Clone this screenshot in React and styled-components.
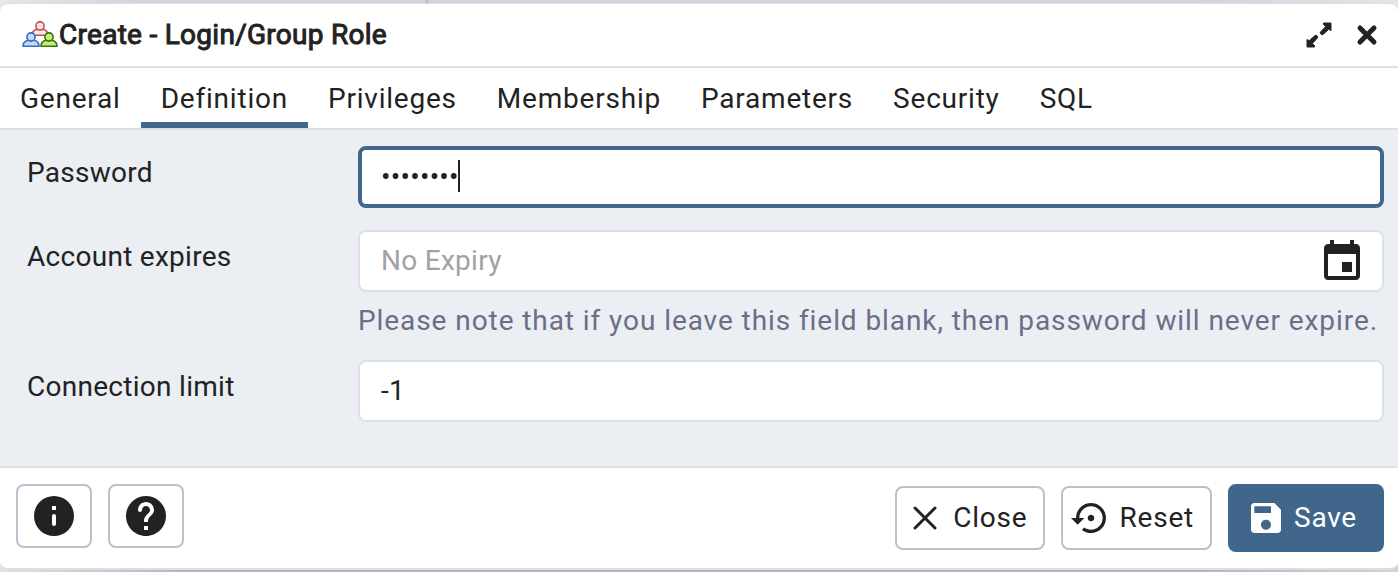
import React from "react";
import styled, { createGlobalStyle, css } from "styled-components";

const ink = "#222222";
const primary = "#41668c";
const line = "#dde0e6";
const outline = "#bac1cd";

const GlobalStyle = createGlobalStyle`
  *, *::before, *::after { box-sizing: border-box; }
  body {
    margin: 0;
    background: #b4bac6;
    color: ${ink};
    font-family: Roboto, "Liberation Sans", sans-serif;
    font-size: 28px;
    line-height: 36px;
    letter-spacing: 0.01em;
  }
  button, input { font: inherit; letter-spacing: inherit; color: inherit; }
`;

const Backdrop = styled.div`
  min-height: 100vh;
  padding: 3px 0 2px;
  background: linear-gradient(90deg, transparent 426px, #b4b9c3 426px, #b4b9c3 428px, transparent 428px) top / 100% 3px no-repeat,
    linear-gradient(90deg, #e6e6ec 0, #d0d4db 140px, #d0d4db 1200px, #e4e4ea 100%) top / 100% 12px no-repeat,
    linear-gradient(90deg, #e0e0e6 0, #b0b7c3 180px, #b0b7c3 1200px, #d0d3da 100%);
`;

const Dialog = styled.section`
  background: #fff;
  border-top: 1px solid #dcdee6;
  border-bottom: 2px solid #dadee5;
  border-radius: 8px;
  overflow: hidden;
`;

const TitleBar = styled.header`
  display: flex;
  align-items: center;
  height: 64px;
  padding: 0 18px 0 22px;
  border-bottom: 2px solid ${line};
`;

const Title = styled.h1`
  flex: 1;
  margin: 0;
  font-size: 28px;
  font-weight: 400;
  -webkit-text-stroke: 1px currentColor;
`;

const TitleButton = styled.button`
  display: flex;
  margin-left: 22px;
  padding: 0;
  border: 0;
  background: none;
`;

const Tabs = styled.nav`
  display: flex;
  height: 62px;
  border-bottom: 2px solid ${line};
`;

const Tab = styled.button`
  padding: 8px 20px 0;
  border: 0;
  border-bottom: 6px solid ${(p) => (p.$active ? primary : "transparent")};
  background: none;
  letter-spacing: 0.028em;
`;

const Form = styled.form`
  display: grid;
  grid-template-columns: 1fr 3fr;
  row-gap: 22px;
  padding: 16px 14px 44px 16px;
  background: #ebeef3;
`;

const Label = styled.label`
  padding: 9px 0 0 11px;
`;

const Field = styled.div`
  position: relative;
`;

const Input = styled.input`
  display: block;
  width: 100%;
  height: 62px;
  padding: 0 21px 2px;
  border: 2px solid ${line};
  border-radius: 8px;
  outline: 0;
  background: #fff;
  &::placeholder { color: #a2a2a2; opacity: 1; }
  ${(p) =>
    p.$focused &&
    css`
      padding: 0 19px 2px;
      border: 4px solid ${primary};
      caret-color: transparent;
    `}
`;

const Caret = styled.span`
  position: absolute;
  top: 14px;
  left: 100px;
  width: 2px;
  height: 32px;
  background: ${ink};
`;

const CalendarButton = styled.button`
  position: absolute;
  top: 6px;
  right: 18px;
  display: flex;
  padding: 0;
  border: 0;
  background: none;
`;

const Hint = styled.p`
  margin: 11px 0 -1px;
  color: #6b6e87;
  letter-spacing: 0.033em;
  white-space: nowrap;
`;

const Footer = styled.footer`
  display: flex;
  align-items: center;
  gap: 16px;
  height: 102px;
  padding: 0 14px 0 16px;
  border-top: 2px solid ${line};
`;

const Button = styled.button`
  display: flex;
  align-items: center;
  justify-content: center;
  gap: 8px;
  height: 64px;
  padding: 0 16px 0 8px;
  border: 2px solid ${outline};
  border-radius: 8px;
  background: #fff;
  letter-spacing: 0.028em;
  ${(p) =>
    p.$primary &&
    css`
      height: 68px;
      padding: 0 25px 0 16px;
      border-color: ${primary};
      background: ${primary};
      color: #fff;
    `}
`;

const IconButton = styled(Button)`
  width: 76px;
  padding: 0;
`;

const HelpGroup = styled.div`
  display: flex;
  gap: 16px;
  margin: 0 auto 4px 0;
`;

const Glyph = ({ size = 40, d }) => (
  <svg width={size} height={size} viewBox="0 0 24 24" fill="currentColor" aria-hidden="true">
    <path d={d} />
  </svg>
);

const Person = ({ x, y, fill, stroke }) => (
  <g transform={`translate(${x} ${y})`} fill={fill} stroke={stroke} strokeWidth="1.6">
    <path d="M1 14.2c0-3.6 2.2-5.4 5.6-5.9h4.8c3.4.5 5.600 2.300 5.600 5.900z" />
    <circle cx="9" cy="5" r="4.100" />
  </g>
);

const RoleIcon = () => (
  <svg width="37" height="28" viewBox="0 0 37 28" aria-hidden="true">
    <Person x={9} y={0} fill="#fbe9e9" stroke="#c34f4f" />
    <Person x={0} y={11} fill="#c2dcf3" stroke="#3c69c4" />
    <Person x={18} y={11} fill="#c3f26a" stroke="#38701c" />
  </svg>
);

const ExpandIcon = () => (
  <svg width="26" height="26" viewBox="0 0 26 26" aria-hidden="true">
    <g fill={ink} stroke={ink} strokeWidth="1" strokeLinejoin="round">
      <path d="M17.500 1H25v7.500l-2.300-1.200-5.700 5.200c-1 1-3.500-1.300-2.500-2.400l5.200-5.600-2.200-2z" />
      <path d="M8.500 25H1v-7.500l2.300 1.200 5.700-5.200c1-1 3.500 1.300 2.500 2.400l-5.200 5.600 2.200 2z" />
    </g>
  </svg>
);

const CloseIcon = () => (
  <svg width="26" height="26" viewBox="0 0 26 26" aria-hidden="true">
    <path d="M6 6l14 14M20 6L6 20" stroke={ink} strokeWidth="5" strokeLinecap="round" />
  </svg>
);

const CloseThin = () => (
  <svg width="40" height="40" viewBox="0 0 40 40" aria-hidden="true">
    <path d="M10 10l20 20M30 10L10 30" stroke={ink} strokeWidth="3" strokeLinecap="round" />
  </svg>
);

const icons = {
  info: "M12 2a10 10 0 1 0 0 20 10 10 0 0 0 0-20zm0 15c-.55 0-1-.45-1-1v-4c0-.55.45-1 1-1s1 .45 1 1v4c0 .55-.45 1-1 1zm1-8h-2V7h2v2z",
  help: "M12 2C6.480 2 2 6.480 2 12s4.480 10 10 10 10-4.480 10-10S17.520 2 12 2zm1 17h-2v-2h2v2zm2.070-7.750l-.9.920C13.450 12.900 13 13.500 13 15h-2v-.5c0-1.100.450-2.100 1.170-2.830l1.240-1.260c.370-.360.590-.860.590-1.410 0-1.100-.9-2-2-2s-2 .9-2 2c0 .550-.450 1-1 1s-1-.450-1-1c0-2.210 1.790-4 4-4s4 1.790 4 4c0 .880-.360 1.680-.930 2.250z",
  calendar: "M19 4h-1V2h-2v2H8V2H6v2H5c-1.100 0-2 .9-2 2v14c0 1.100.9 2 2 2h14c1.100 0 2-.9 2-2V6c0-1.100-.9-2-2-2zm0 16H5V9h14v11zm-7-7h5v5h-5z",
  reset: "M14 12c0-1.100-.9-2-2-2s-2 .9-2 2 .9 2 2 2 2-.9 2-2zm-2-9c-4.970 0-9 4.030-9 9H0l4 4 4-4H5c0-3.870 3.130-7 7-7s7 3.130 7 7-3.130 7-7 7c-1.510 0-2.910-.490-4.060-1.300l-1.420 1.440C8.040 20.300 9.940 21 12 21c4.970 0 9-4.030 9-9s-4.030-9-9-9z",
  save: "M17 3H5c-1.110 0-2 .9-2 2v14c0 1.100.890 2 2 2h14c1.100 0 2-.9 2-2V7l-4-4zm-5 16c-1.660 0-3-1.340-3-3s1.340-3 3-3 3 1.340 3 3-1.340 3-3 3zm3-10H5V5h10v4z",
};

const tabs = ["General", "Definition", "Privileges", "Membership", "Parameters", "Security", "SQL"];

export default function App() {
  return (
    <Backdrop>
      <GlobalStyle />
      <Dialog role="dialog" aria-labelledby="dialog-title">
        <TitleBar>
          <RoleIcon />
          <Title id="dialog-title">Create - Login/Group Role</Title>
          <TitleButton type="button" aria-label="Maximize"><ExpandIcon /></TitleButton>
          <TitleButton type="button" aria-label="Close dialog"><CloseIcon /></TitleButton>
        </TitleBar>
        <Tabs role="tablist">
          {tabs.map((name) => (
            <Tab key={name} type="button" role="tab" aria-selected={name === "Definition"} $active={name === "Definition"}>
              {name}
            </Tab>
          ))}
        </Tabs>
        <Form>
          <Label htmlFor="password">Password</Label>
          <Field>
            <Input id="password" type="password" defaultValue="postgres" $focused />
            <Caret />
          </Field>
          <Label htmlFor="expires">Account expires</Label>
          <Field>
            <Input id="expires" type="text" placeholder="No Expiry" aria-describedby="expires-hint" />
            <CalendarButton type="button" aria-label="Choose date"><Glyph size={48} d={icons.calendar} /></CalendarButton>
            <Hint id="expires-hint">Please note that if you leave this field blank, then password will never expire.</Hint>
          </Field>
          <Label htmlFor="limit">Connection limit</Label>
          <Field>
            <Input id="limit" type="text" inputMode="numeric" defaultValue="-1" />
          </Field>
        </Form>
        <Footer>
          <HelpGroup>
            <IconButton type="button" aria-label="Information"><Glyph size={48} d={icons.info} /></IconButton>
            <IconButton type="button" aria-label="Help"><Glyph size={48} d={icons.help} /></IconButton>
          </HelpGroup>
          <Button type="button"><CloseThin />Close</Button>
          <Button type="button"><Glyph d={icons.reset} />Reset</Button>
          <Button type="button" $primary><Glyph d={icons.save} />Save</Button>
        </Footer>
      </Dialog>
    </Backdrop>
  );
}
